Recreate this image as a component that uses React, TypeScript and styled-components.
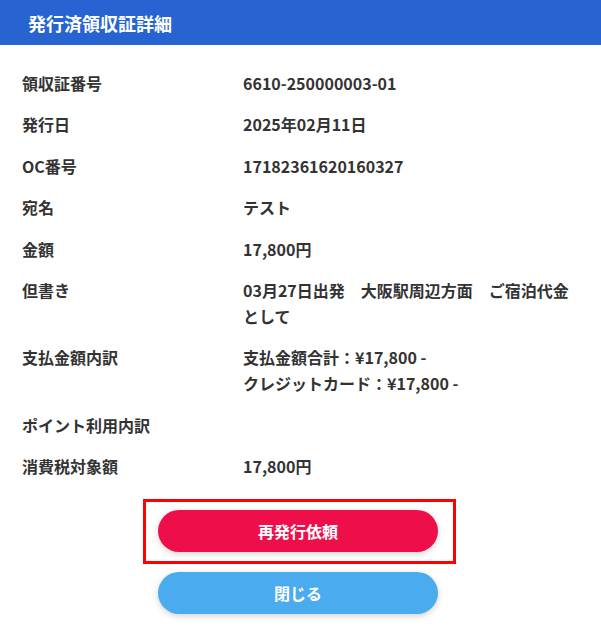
import React from "react";
import styled, { createGlobalStyle } from "styled-components";

const Global = createGlobalStyle`
  html, body { margin: 0; padding: 0; background: #ffffff; }
  body { font-family: "Noto Sans CJK JP", "Noto Sans", sans-serif; }
  * { box-sizing: border-box; }
`;

const Page = styled.div`
  width: 601px;
  min-height: 635px;
  background: #ffffff;
  display: flex;
  flex-direction: column;
`;

const Header = styled.header`
  height: 45px;
  background: #2763d1;
  color: #ffffff;
  display: flex;
  align-items: center;
  padding: 0 28px;
  font-size: 18px;
  font-weight: 700;
  letter-spacing: 0;
`;

const List = styled.dl`
  margin: 0;
  padding: 25px 22px 0 22px;
  display: flex;
  flex-direction: column;
  gap: 15.4px;
`;

const Row = styled.div`
  display: grid;
  grid-template-columns: 221px 1fr;
  font-size: 16px;
  line-height: 26px;
  font-weight: 700;
  color: #333333;
`;

const Label = styled.dt`
  margin: 0;
`;

const Value = styled.dd`
  margin: 0;
  white-space: pre-wrap;
`;

const Actions = styled.div`
  display: flex;
  flex-direction: column;
  align-items: center;
  padding: 20px 5px 0 0;
  gap: 8px;
`;

const FocusFrame = styled.div`
  border: 3px solid #ff0000;
  padding: 8px 15px 9px 12px;
  margin-left: 3px;
`;

const Button = styled.button<{ $tone: "red" | "blue" }>`
  width: 280px;
  height: 42px;
  border: none;
  border-radius: 21px;
  background: ${(p) => (p.$tone === "red" ? "#ee0f4a" : "#4aabee")};
  color: #ffffff;
  font-family: "Noto Sans CJK JP", "Noto Sans", sans-serif;
  font-size: 16px;
  font-weight: 700;
  box-shadow: 0 2px 6px rgba(0, 0, 0, 0.18);
  cursor: pointer;
`;

const rows: [string, string][] = [
  ["領収証番号", "6610-250000003-01"],
  ["発行日", "2025年02月11日"],
  ["OC番号", "17182361620160327"],
  ["宛名", "テスト"],
  ["金額", "17,800円"],
  ["但書き", "03月27日出発　大阪駅周辺方面　ご宿泊代金として"],
  ["支払金額内訳", "支払金額合計：¥17,800 -\nクレジットカード：¥17,800 -"],
  ["ポイント利用内訳", ""],
  ["消費税対象額", "17,800円"],
];

export default function App() {
  return (
    <Page>
      <Global />
      <Header>発行済領収証詳細</Header>
      <List>
        {rows.map(([l, v]) => (
          <Row key={l}>
            <Label>{l}</Label>
            <Value>{v}</Value>
          </Row>
        ))}
      </List>
      <Actions>
        <FocusFrame>
          <Button $tone="red">再発行依頼</Button>
        </FocusFrame>
        <Button $tone="blue">閉じる</Button>
      </Actions>
    </Page>
  );
}
